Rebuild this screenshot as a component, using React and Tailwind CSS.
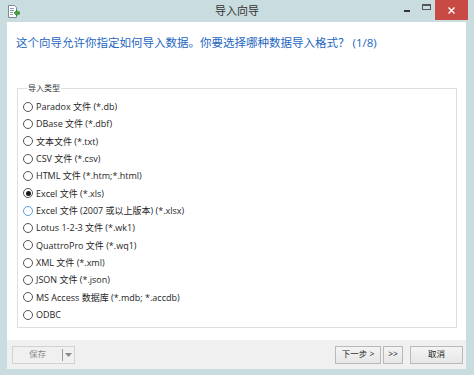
import React, { useState } from "react";

const FORMATS = [
  "Paradox 文件 (*.db)",
  "DBase 文件 (*.dbf)",
  "文本文件 (*.txt)",
  "CSV 文件 (*.csv)",
  "HTML 文件 (*.htm;*.html)",
  "Excel 文件 (*.xls)",
  "Excel 文件 (2007 或以上版本) (*.xlsx)",
  "Lotus 1-2-3 文件 (*.wk1)",
  "QuattroPro 文件 (*.wq1)",
  "XML 文件 (*.xml)",
  "JSON 文件 (*.json)",
  "MS Access 数据库 (*.mdb; *.accdb)",
  "ODBC",
];

function WizardIcon() {
  return (
    <svg width="13" height="13" viewBox="0 0 13 13">
      <path d="M1.5 0.5h6l2 2v10h-8z" fill="#fff" stroke="#7a8a96" />
      <path d="M3 3.5h4M3 5.5h4M3 7.5h3M3 9.5h3" stroke="#8aa0b0" />
      <path d="M7 8l3-3v1.8h2.5v2.4H10V11z" fill="#3aa635" stroke="#2a7d26" strokeWidth="0.6" />
    </svg>
  );
}

function Radio({ checked, focused }) {
  return (
    <span
      className={`w-[10px] h-[10px] rounded-full border bg-white flex items-center justify-center shrink-0 ${
        focused ? "border-[#5b9be0]" : "border-[#555]"
      }`}
    >
      {checked && <span className="w-[5px] h-[5px] rounded-full bg-[#1a1a1a]" />}
    </span>
  );
}

function Button({ children, className = "" }) {
  return (
    <button
      className={`h-[18px] border border-[#b9b9b9] bg-gradient-to-b from-[#f4f4f4] to-[#e6e6e6] text-[8.5px] text-[#222] flex items-center justify-center ${className}`}
    >
      {children}
    </button>
  );
}

export default function App() {
  const [selected, setSelected] = useState(5);

  return (
    <div
      className="w-[474px] h-[375px] bg-[#c9dcdf] flex flex-col"
      style={{ fontFamily: '"Open Sans", "Noto Sans CJK SC", sans-serif' }}
    >
      {/* Title bar */}
      <div className="h-[22px] grid grid-cols-[1fr_auto_1fr] items-start">
        <div className="pl-[7px] pt-[5px]">
          <WizardIcon />
        </div>
        <div className="text-[11px] leading-[22px] text-[#333]">导入向导</div>
        <div className="flex justify-end items-start pr-[6px]">
          <span className="w-[6px] h-[2px] bg-[#333] mt-[10px] mr-[12px]" />
          <span className="w-[9px] h-[6px] border border-[#555] border-t-2 mt-[4px] mr-[4px]" />
          <button className="w-[33px] h-[20px] bg-[#c84a45] text-white flex items-center justify-center">
            <svg width="7" height="7" viewBox="0 0 7 7">
              <path d="M0.5 0.5l6 6M6.5 0.5l-6 6" stroke="#fff" strokeWidth="1.4" />
            </svg>
          </button>
        </div>
      </div>

      {/* Body */}
      <div className="flex-1 ml-[7px] mr-[8px] flex flex-col">
        <div className="bg-white h-[318px] flex flex-col">
          <div className="pl-[9px] pt-[13px] text-[11.5px] leading-[16px] text-[#2466c2]">
            这个向导允许你指定如何导入数据。你要选择哪种数据导入格式？ (1/8)
          </div>

          <fieldset className="mt-[32px] ml-[10px] mr-[9px] h-[245px] border border-[#dcdfe2] pl-[5px] pt-[5px]">
            <legend className="ml-[4px] px-[1px] text-[8px] leading-[10px] text-[#333]">导入类型</legend>
            <div className="flex flex-col">
              {FORMATS.map((label, i) => (
                <label
                  key={label}
                  onClick={() => setSelected(i)}
                  className="h-[17.35px] flex items-center gap-[3px] text-[9px] text-[#1e1e1e] cursor-default"
                >
                  <Radio checked={selected === i} focused={i === 6} />
                  <span>{label}</span>
                </label>
              ))}
            </div>
          </fieldset>
        </div>

        {/* Footer */}
        <div className="bg-[#f0f0f0] h-[29px] flex items-center pl-[5px] pr-[3px]">
          <div className="h-[18px] w-[63px] border border-[#d2d2d2] bg-[#f0f0f0] flex items-center">
            <span className="flex-1 text-center text-[8.5px] text-[#8a8a8a]">保存</span>
            <span className="w-[1px] h-[12px] bg-[#9a9a9a]" />
            <span className="w-[11px] flex justify-center">
              <svg width="7" height="4" viewBox="0 0 7 4">
                <path d="M0 0h7L3.5 4z" fill="#8a8a8a" />
              </svg>
            </span>
          </div>
          <div className="flex-1" />
          <Button className="w-[46px]">下一步 &gt;</Button>
          <Button className="w-[20px] ml-[2px]">&gt;&gt;</Button>
          <Button className="w-[53px] ml-[7px]">取消</Button>
        </div>
      </div>
      <div className="h-[6px]" />
    </div>
  );
}
